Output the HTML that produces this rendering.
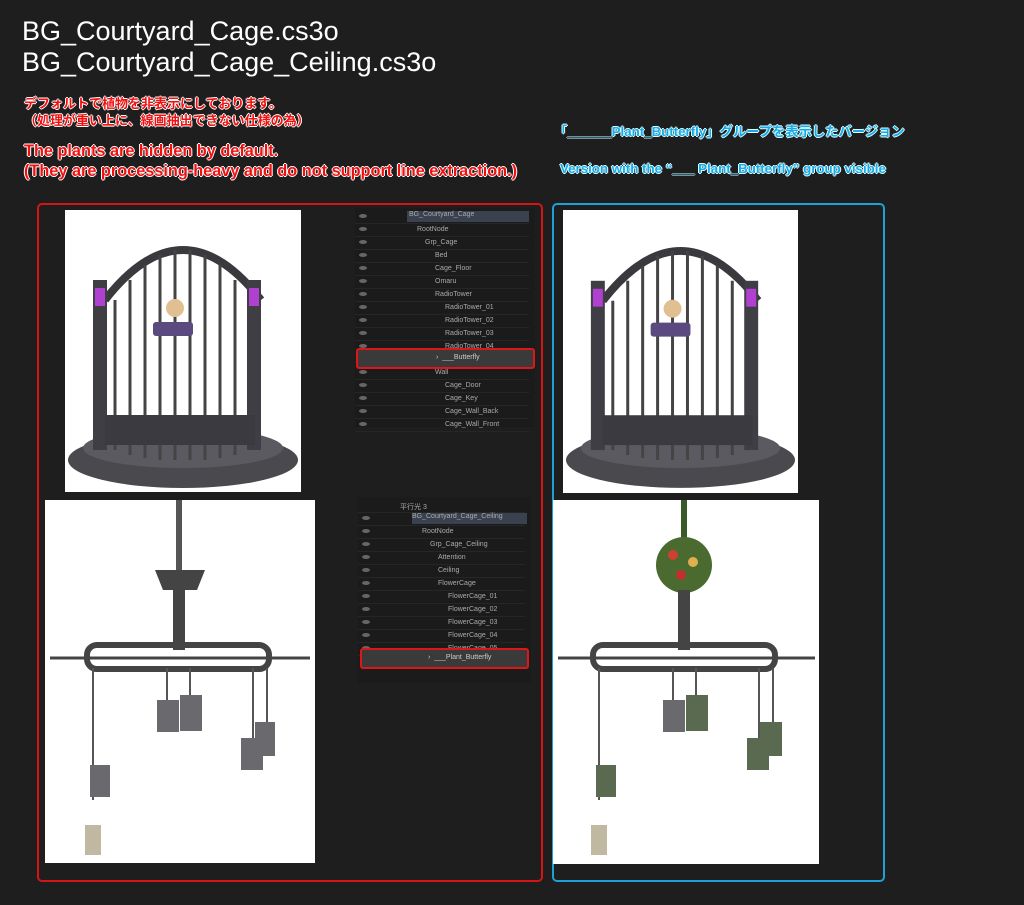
<!DOCTYPE html>
<html><head><meta charset="utf-8"><style>
body{margin:0;width:1024px;height:905px;background:#1e1e1e;position:relative;overflow:hidden;font-family:"Liberation Sans","Noto Sans CJK JP",sans-serif}
.a{position:absolute;white-space:nowrap}
.t{color:#fff;font-size:27px;left:22px}
.r{color:#f01010;font-weight:bold;text-shadow:-1px 0 #fff,1px 0 #fff,0 -1px #fff,0 1px #fff}
.c{color:#1aa8e8;font-weight:bold;font-size:13.3px;text-shadow:-1px 0 #dff,1px 0 #dff,0 -1px #dff,0 1px #dff}
.box{position:absolute;border:2px solid;border-radius:5px;box-sizing:border-box}
.w{position:absolute;background:#fff;overflow:hidden}
.p{position:absolute;background:#1b1b1b;font-size:7px;color:#aaa}
.row{position:absolute;left:0;right:6px;height:12.7px;border-bottom:1px solid #262626}
.row i{position:absolute;left:4px;top:4px;width:8px;height:4px;border-radius:50%;background:#666}
.row span{position:absolute;top:3px}
.hl{position:absolute;border:2px solid #e01515;border-radius:3px;background:#3a3a3a}
</style></head><body>
<div class="a t" style="top:16px">BG_Courtyard_Cage.cs3o</div>
<div class="a t" style="top:47px">BG_Courtyard_Cage_Ceiling.cs3o</div>
<div class="a r" style="left:24px;top:95px;font-size:13px;line-height:17px">デフォルトで植物を非表示にしております。<br>（処理が重い上に、線画抽出できない仕様の為）</div>
<div class="a r" style="left:24px;top:141px;font-size:16.3px;line-height:20px">The plants are hidden by default.<br>(They are processing-heavy and do not support line extraction.)</div>
<div class="a c" style="left:554px;top:121px">「______Plant_Butterfly」グループを表示したバージョン</div>
<div class="a c" style="left:560px;top:161px">Version with the “___ Plant_Butterfly” group visible</div>

<div class="box" style="left:37px;top:203px;width:506px;height:679px;border-color:#d51515"></div>
<div class="box" style="left:552px;top:203px;width:333px;height:679px;border-color:#1ea0d8"></div>

<div class="w" style="left:65px;top:210px;width:236px;height:282px"><svg width="236" height="282" viewBox="0 0 236 282">
<ellipse cx="118" cy="250" rx="115" ry="28" fill="#4a4a4e"/><ellipse cx="118" cy="238" rx="100" ry="20" fill="#5a5a60"/>
<path d="M40 90 Q118 -10 196 90" fill="none" stroke="#3a3a3e" stroke-width="8"/>
<g stroke="#444" stroke-width="3">
<line x1="50" y1="90" x2="50" y2="240"/><line x1="65" y1="70" x2="65" y2="245"/><line x1="80" y1="55" x2="80" y2="248"/><line x1="95" y1="45" x2="95" y2="250"/><line x1="110" y1="40" x2="110" y2="250"/><line x1="125" y1="40" x2="125" y2="250"/><line x1="140" y1="45" x2="140" y2="250"/><line x1="155" y1="55" x2="155" y2="248"/><line x1="170" y1="70" x2="170" y2="245"/><line x1="185" y1="90" x2="185" y2="240"/></g>
<rect x="28" y="70" width="14" height="170" fill="#3e3e44"/><rect x="182" y="70" width="14" height="170" fill="#3e3e44"/>
<rect x="30" y="78" width="10" height="18" fill="#b040d0"/><rect x="184" y="78" width="10" height="18" fill="#b040d0"/>
<rect x="88" y="112" width="40" height="14" rx="3" fill="#5a4a80"/><circle cx="110" cy="98" r="9" fill="#e0c090"/>
<rect x="40" y="205" width="150" height="30" fill="#3a3a40"/></svg></div>
<div class="w" style="left:563px;top:210px;width:235px;height:283px"><svg width="235" height="283" viewBox="0 0 236 282">
<ellipse cx="118" cy="250" rx="115" ry="28" fill="#4a4a4e"/><ellipse cx="118" cy="238" rx="100" ry="20" fill="#5a5a60"/>
<path d="M40 90 Q118 -10 196 90" fill="none" stroke="#3a3a3e" stroke-width="8"/>
<g stroke="#444" stroke-width="3">
<line x1="50" y1="90" x2="50" y2="240"/><line x1="65" y1="70" x2="65" y2="245"/><line x1="80" y1="55" x2="80" y2="248"/><line x1="95" y1="45" x2="95" y2="250"/><line x1="110" y1="40" x2="110" y2="250"/><line x1="125" y1="40" x2="125" y2="250"/><line x1="140" y1="45" x2="140" y2="250"/><line x1="155" y1="55" x2="155" y2="248"/><line x1="170" y1="70" x2="170" y2="245"/><line x1="185" y1="90" x2="185" y2="240"/></g>
<rect x="28" y="70" width="14" height="170" fill="#3e3e44"/><rect x="182" y="70" width="14" height="170" fill="#3e3e44"/>
<rect x="30" y="78" width="10" height="18" fill="#b040d0"/><rect x="184" y="78" width="10" height="18" fill="#b040d0"/>
<rect x="88" y="112" width="40" height="14" rx="3" fill="#5a4a80"/><circle cx="110" cy="98" r="9" fill="#e0c090"/>
<rect x="40" y="205" width="150" height="30" fill="#3a3a40"/></svg></div>

<div class="w" style="left:45px;top:500px;width:270px;height:363px"><svg width="270" height="363">
<rect x="131" y="0" width="6" height="70" fill="#555"/><path d="M110 70 h50 l-8 20 h-34z" fill="#444"/>
<rect x="128" y="90" width="12" height="60" fill="#444"/>
<path d="M5 158 L265 158" stroke="#444" stroke-width="3"/>
<rect x="42" y="145" width="182" height="24" rx="10" fill="none" stroke="#444" stroke-width="6"/>
<g stroke="#555" stroke-width="2"><line x1="48" y1="168" x2="48" y2="300"/><line x1="122" y1="168" x2="122" y2="200"/><line x1="145" y1="168" x2="145" y2="200"/><line x1="208" y1="168" x2="208" y2="240"/><line x1="222" y1="168" x2="222" y2="225"/></g>
<rect x="112" y="200" width="22" height="32" fill="#6a6a6e"/><rect x="135" y="195" width="22" height="36" fill="#6a6a6e"/>
<rect x="196" y="238" width="22" height="32" fill="#6a6a6e"/><rect x="210" y="222" width="20" height="34" fill="#6a6a6e"/>
<rect x="45" y="265" width="20" height="32" fill="#6a6a6e"/><rect x="40" y="325" width="16" height="30" fill="#c0b8a0"/>
</svg></div>
<div class="w" style="left:553px;top:500px;width:266px;height:364px"><svg width="266" height="364">
<rect x="128" y="0" width="6" height="40" fill="#3a5a2a"/><ellipse cx="131" cy="65" rx="28" ry="28" fill="#4a6a30"/>
<circle cx="120" cy="55" r="5" fill="#d04030"/><circle cx="140" cy="62" r="5" fill="#e0b050"/><circle cx="128" cy="75" r="5" fill="#c03030"/>
<rect x="125" y="90" width="12" height="60" fill="#444"/>
<path d="M5 158 L262 158" stroke="#444" stroke-width="3"/>
<rect x="40" y="145" width="182" height="24" rx="10" fill="none" stroke="#444" stroke-width="6"/>
<g stroke="#555" stroke-width="2"><line x1="46" y1="168" x2="46" y2="300"/><line x1="120" y1="168" x2="120" y2="200"/><line x1="143" y1="168" x2="143" y2="200"/><line x1="206" y1="168" x2="206" y2="240"/><line x1="220" y1="168" x2="220" y2="225"/></g>
<rect x="110" y="200" width="22" height="32" fill="#6a6a6e"/><rect x="133" y="195" width="22" height="36" fill="#5a6a50"/>
<rect x="194" y="238" width="22" height="32" fill="#5a6a50"/><rect x="207" y="222" width="22" height="34" fill="#5a6a50"/>
<rect x="43" y="265" width="20" height="32" fill="#5a6a50"/><rect x="38" y="325" width="16" height="30" fill="#c0b8a0"/>
</svg></div>

<div class="p" style="left:355px;top:208px;width:180px;height:219px">
<div class="row" style="top:2px;"><i></i><span style="left:52px;background:#3a4250;width:120px;height:11px;top:1px;padding-left:2px">BG_Courtyard_Cage</span></div>
<div class="row" style="top:15px"><i></i><span style="left:62px">RootNode</span></div>
<div class="row" style="top:28px"><i></i><span style="left:70px">Grp_Cage</span></div>
<div class="row" style="top:41px"><i></i><span style="left:80px">Bed</span></div>
<div class="row" style="top:54px"><i></i><span style="left:80px">Cage_Floor</span></div>
<div class="row" style="top:67px"><i></i><span style="left:80px">Omaru</span></div>
<div class="row" style="top:80px"><i></i><span style="left:80px">RadioTower</span></div>
<div class="row" style="top:93px"><i></i><span style="left:90px">RadioTower_01</span></div>
<div class="row" style="top:106px"><i></i><span style="left:90px">RadioTower_02</span></div>
<div class="row" style="top:119px"><i></i><span style="left:90px">RadioTower_03</span></div>
<div class="row" style="top:132px"><i></i><span style="left:90px">RadioTower_04</span></div>
<div class="row" style="top:158px"><i></i><span style="left:80px">Wall</span></div>
<div class="row" style="top:171px"><i></i><span style="left:90px">Cage_Door</span></div>
<div class="row" style="top:184px"><i></i><span style="left:90px">Cage_Key</span></div>
<div class="row" style="top:197px"><i></i><span style="left:90px">Cage_Wall_Back</span></div>
<div class="row" style="top:210px"><i></i><span style="left:90px">Cage_Wall_Front</span></div>
</div>
<div class="hl" style="left:356px;top:348px;width:175px;height:17px"><span class="a" style="left:78px;top:4px;font-size:7px;color:#ccc">›&nbsp; ___Butterfly</span></div>
<div class="p" style="left:358px;top:497px;width:173px;height:186px">
<div class="row" style="top:2px"><span style="left:42px">平行光 3</span></div>
<div class="row" style="top:15px"><i></i><span style="left:54px;background:#3a4250;width:115px;height:11px;top:1px">BG_Courtyard_Cage_Ceiling</span></div>
<div class="row" style="top:28px"><i></i><span style="left:64px">RootNode</span></div>
<div class="row" style="top:41px"><i></i><span style="left:72px">Grp_Cage_Ceiling</span></div>
<div class="row" style="top:54px"><i></i><span style="left:80px">Attention</span></div>
<div class="row" style="top:67px"><i></i><span style="left:80px">Ceiling</span></div>
<div class="row" style="top:80px"><i></i><span style="left:80px">FlowerCage</span></div>
<div class="row" style="top:93px"><i></i><span style="left:90px">FlowerCage_01</span></div>
<div class="row" style="top:106px"><i></i><span style="left:90px">FlowerCage_02</span></div>
<div class="row" style="top:119px"><i></i><span style="left:90px">FlowerCage_03</span></div>
<div class="row" style="top:132px"><i></i><span style="left:90px">FlowerCage_04</span></div>
<div class="row" style="top:145px"><i></i><span style="left:90px">FlowerCage_05</span></div>
</div>
<div class="hl" style="left:360px;top:648px;width:165px;height:17px"><span class="a" style="left:66px;top:4px;font-size:7px;color:#ccc">›&nbsp; ___Plant_Butterfly</span></div>
</body></html>
